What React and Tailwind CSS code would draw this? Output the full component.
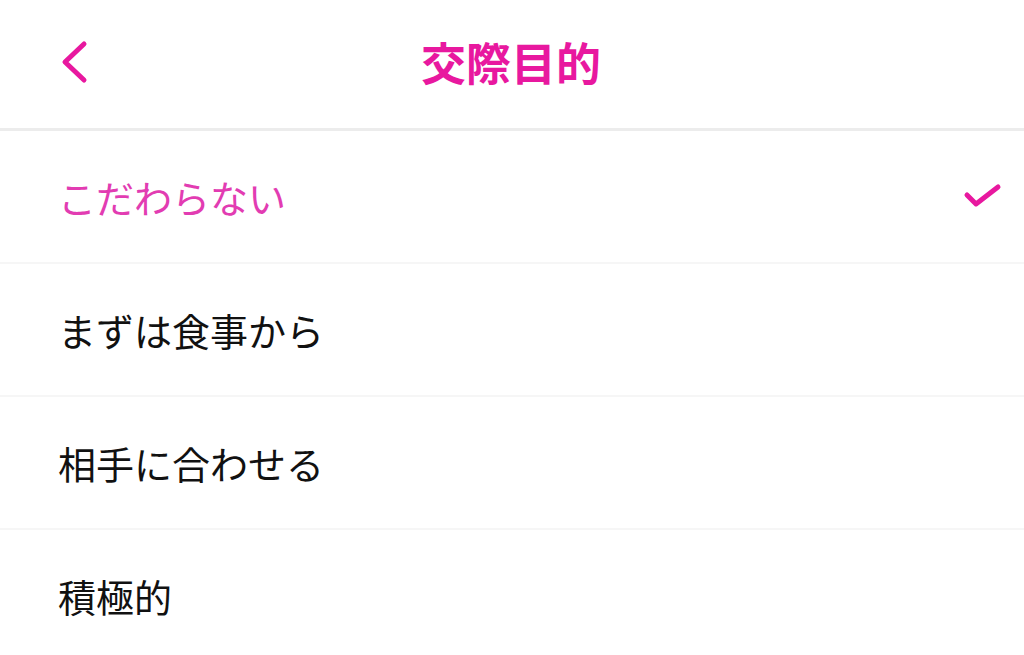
import React, { useState } from "react";

const options = ["こだわらない", "まずは食事から", "相手に合わせる", "積極的"];

function App() {
  const [selected, setSelected] = useState(0);

  return (
    <div
      className="w-[1024px] h-[655px] overflow-hidden bg-white"
      style={{ fontFamily: '"Noto Sans CJK JP", "Noto Sans", sans-serif' }}
    >
      <header className="relative h-[131px] flex items-center justify-center border-b-[3px] border-[#ececec]">
        <button className="absolute left-[58px] top-[38px] w-[34px] h-[48px] flex items-center justify-center">
          <svg width="34" height="48" viewBox="0 0 34 48" fill="none">
            <path d="M26 6 L7 24 L26 42" stroke="#e8189f" strokeWidth="5" strokeLinecap="round" strokeLinejoin="round" />
          </svg>
        </button>
        <h1 className="text-[45px] font-bold text-[#e8189f] leading-none -mt-[6px] ml-[-2px]">交際目的</h1>
      </header>
      <ul>
        {options.map((label, i) => (
          <li
            key={label}
            onClick={() => setSelected(i)}
            className="h-[133px] flex items-center justify-between pl-[58px] pr-[22px] border-b-2 border-[#f6f6f6]"
          >
            <span className={"text-[38px] leading-none " + (selected === i ? "text-[#e23cb2]" : "text-[#111111]")}>
              {label}
            </span>
            {selected === i && (
              <svg width="40" height="30" viewBox="0 0 40 30" fill="none">
                <path d="M5 13 L14 22 L36 5" stroke="#e8189f" strokeWidth="5" strokeLinecap="round" strokeLinejoin="round" />
              </svg>
            )}
          </li>
        ))}
      </ul>
    </div>
  );
}

export default App;
